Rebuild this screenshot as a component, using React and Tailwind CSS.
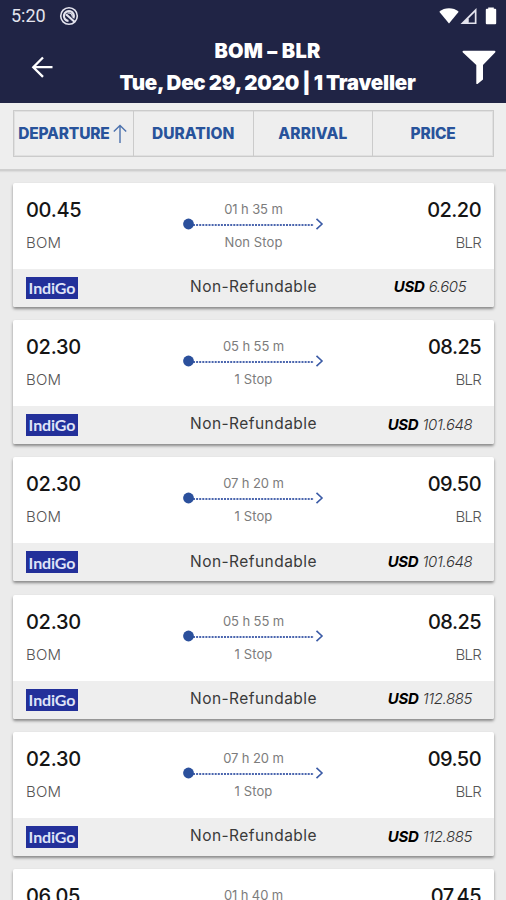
import React from "react";

const flights = [
  { depart: "00.45", arrive: "02.20", duration: "01 h 35 m", stops: "Non Stop", price: "6.605" },
  { depart: "02.30", arrive: "08.25", duration: "05 h 55 m", stops: "1 Stop", price: "101.648" },
  { depart: "02.30", arrive: "09.50", duration: "07 h 20 m", stops: "1 Stop", price: "101.648" },
  { depart: "02.30", arrive: "08.25", duration: "05 h 55 m", stops: "1 Stop", price: "112.885" },
  { depart: "02.30", arrive: "09.50", duration: "07 h 20 m", stops: "1 Stop", price: "112.885" },
  { depart: "06.05", arrive: "07.45", duration: "01 h 40 m", stops: "Non Stop", price: "112.885" },
];

function StatusBar() {
  return (
    <div className="flex h-8 items-center justify-between pl-[11px] pr-[9px]">
      <div className="flex items-center gap-[13px]">
        <span className="font-[Roboto,sans-serif] text-[18px] leading-8 text-[#e4e4ee]">5:20</span>
        <svg width="20" height="20" viewBox="0 0 20 20" fill="none" stroke="#e4e4ee">
          <circle cx="10" cy="10" r="8.3" strokeWidth="1.6" />
          <path d="M14.400 12.200A5 5 0 1 0 9.500 15" strokeWidth="2.200" />
          <path d="M7 8.200l8.500 7.600" strokeWidth="2.200" />
          <path d="M8.500 7.200c2.500-1 5 .8 4.800 3.400" strokeWidth="1.400" />
        </svg>
      </div>
      <div className="flex items-center">
        <svg width="20" height="18" viewBox="0 0 20 18" fill="#fff">
          <path d="M.3 4.700C5.500.2 14.500.2 19.700 4.700L10 16.500z" />
        </svg>
        <svg width="17" height="18" viewBox="0 0 17 18" className="ml-[1px]">
          <path fillRule="evenodd" fill="#e4e4ee" d="M16.500 1v16H.5zM14.800 5.200L8.500 11.500v4h6.300z" />
          <path fill="#e4e4ee" d="M8.500 15.500V11.500L4.500 15.500z" />
        </svg>
        <svg width="12" height="18" viewBox="0 0 12 18" fill="#fff" className="ml-[8px]">
          <path d="M3.200.5h5.600v1.300H10.200a1 1 0 0 1 1 1v13.500a1 1 0 0 1-1 1H1.800a1 1 0 0 1-1-1V2.800a1 1 0 0 1 1-1h1.400z" />
        </svg>
      </div>
    </div>
  );
}

function Header() {
  return (
    <header className="h-[103px] shrink-0 bg-[#202445] text-white">
      <StatusBar />
      <div className="flex h-[71px] items-start justify-between pl-[31px] pr-[10px]">
        <svg width="22" height="22" viewBox="0 0 22 22" fill="none" stroke="#fff" strokeWidth="2.300" className="mt-6">
          <path d="M21.500 11.200H2.500M12 1.500L2.300 11.200l9.700 9.700" />
        </svg>
        <div className="mt-1 ml-[20px] text-center font-black">
          <h1 className="text-[20px] leading-[31px] tracking-[0.25px]">BOM – BLR</h1>
          <h2 className="text-[20.500px] leading-[31px] tracking-[-0.22px] [word-spacing:-0.6px] whitespace-nowrap">
            Tue, Dec 29, 2020 | 1 Traveller
          </h2>
        </div>
        <svg width="34" height="36" viewBox="0 0 34 36" fill="#fff" className="mt-[18px]">
          <path d="M1.500.8h31c1 0 1.200 1 .6 1.700L21 15v14.500l-5.500 4.500c-.7.300-1.200 0-1.200-.8V15L.9 2.500C.3 1.800.5.800 1.500.8z" />
        </svg>
      </div>
    </header>
  );
}

function SortBar() {
  return (
    <div className="h-[68px] shrink-0 border-b-2 border-[#cfcfcf] bg-[#eeeeee] pt-[7px] pr-3 pl-[13px] shadow-[0_1px_1px_#dddddd]">
      <div className="grid h-[47px] grid-cols-4 divide-x divide-[#cbcbcb] border border-[#cbcbcb] text-[15.500px] leading-[44px] font-extrabold text-[#28539b] shadow-[inset_0_0_0_1px_#e0e0e0]">
        <button type="button" className="flex items-center justify-center pt-[1px] pr-[2px] tracking-[-0.2px]">
          DEPARTURE
          <svg width="14" height="20" viewBox="0 0 14 20" fill="none" stroke="#4c71ad" strokeWidth="1.400" className="ml-[3px]">
            <path d="M7 19V1.500M.8 7.500L7 1.500l6.200 6" />
          </svg>
        </button>
        <button type="button" className="pt-[1px] tracking-[0.05px]">DURATION</button>
        <button type="button" className="pt-[1px] tracking-[0.15px]">ARRIVAL</button>
        <button type="button" className="pt-[1px] tracking-[-0.15px]">PRICE</button>
      </div>
    </div>
  );
}

function FlightCard({ flight }) {
  return (
    <article className="h-[124px] shrink-0 overflow-hidden rounded-[2px] bg-white shadow-[0_2px_3px_rgba(0,0,0,0.42)]">
      <div className="flex h-[86px] justify-between px-[13px] pt-[11px]">
        <div className="w-20">
          <p className="text-[20px] leading-8 font-medium tracking-[-0.3px] text-[#151515]">{flight.depart}</p>
          <p className="mt-[1px] text-[15px] leading-8 font-light tracking-[0.15px] text-[#555]">BOM</p>
        </div>
        <div className="flex w-[143px] flex-col items-center text-[13px] text-[#7c7c7c]">
          <p className="mt-[5px] leading-5 tracking-[-0.1px]">{flight.duration}</p>
          <svg width="143" height="14" viewBox="0 0 143 14" fill="none" className="-mt-[2px]">
            <path d="M11 8h121" stroke="#4b66ae" strokeWidth="2.200" strokeDasharray="2 1.100" />
            <circle cx="6.500" cy="7" r="5.400" fill="#2b509c" />
            <path d="M134.500 1.800l5.500 5.200-5.500 5.200" stroke="#3b5ba6" strokeWidth="1.600" />
          </svg>
          <p className="mt-[1px] leading-5 tracking-[0.1px]">{flight.stops}</p>
        </div>
        <div className="w-20 text-right">
          <p className="text-[20px] leading-8 font-medium tracking-[-0.55px] text-[#151515]">{flight.arrive}</p>
          <p className="mt-[1px] text-[15px] leading-8 font-light tracking-[-0.7px] text-[#555]">BLR</p>
        </div>
      </div>
      <div className="flex h-[38px] items-center justify-between bg-[#eeeeee] px-[13px]">
        <div className="w-[102px]">
          <div className="flex h-[22px] w-[52px] items-center justify-center bg-[#23309a] pt-[1px] font-[Lato,sans-serif] text-[16px] font-bold tracking-[-0.1px] text-[#dfe3f7]">
            IndiGo
          </div>
        </div>
        <p className="pb-[1px] text-[15.500px] leading-[34px] tracking-[0.45px] text-[#3a3a3a]">Non-Refundable</p>
        <p className="w-[102px] text-center text-[15px] whitespace-nowrap text-[#333] italic">
          <span className="font-bold tracking-[-0.3px] text-black">USD</span>{" "}
          <span className="font-light tracking-[-0.4px]">{flight.price}</span>
        </p>
      </div>
    </article>
  );
}

export default function App() {
  return (
    <div className="flex h-[900px] w-[506px] flex-col overflow-hidden bg-[#ebebeb] font-[Inter,sans-serif]">
      <Header />
      <SortBar />
      <main className="flex flex-col gap-[13.35px] pt-[11.500px] pr-3 pl-[13px]">
        {flights.map((flight, index) => (
          <FlightCard key={index} flight={flight} />
        ))}
      </main>
    </div>
  );
}
